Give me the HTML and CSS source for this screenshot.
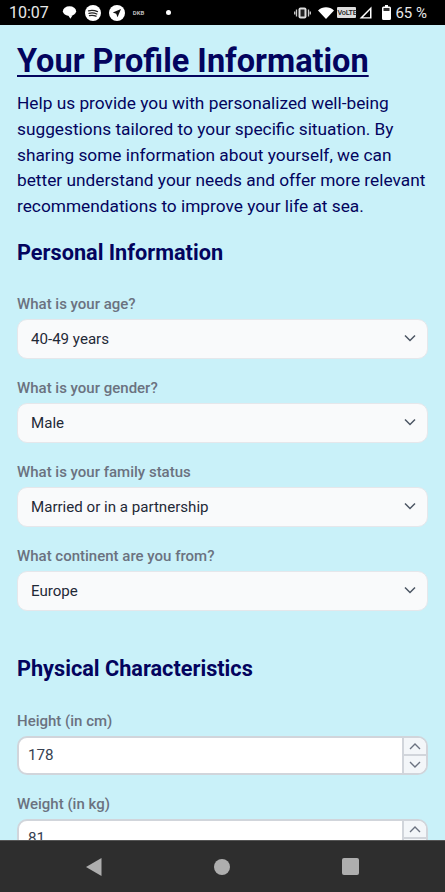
FILE: index.html
```html
<!DOCTYPE html>
<html lang="en">
<head>
<meta charset="utf-8">
<title>Your Profile Information</title>
<link rel="stylesheet" href="styles.css">
</head>
<body>
<div class="phone">
  <header class="status">
    <span class="clock">10:07</span>
    <div class="status-left">
      <svg class="ic" width="15" height="15" viewBox="0 0 17 16"><ellipse cx="8.500" cy="6.500" rx="7.500" ry="5.500" fill="#fff"/><path d="M7 11h5l-2.500 4z" fill="#fff"/></svg>
      <svg class="ic" width="16" height="16" viewBox="0 0 16 16"><circle cx="8" cy="8" r="8" fill="#fff"/><path d="M3.500 5.800c3-.8 6-.6 9 .8M4 8.300c2.700-.7 5.200-.5 7.800.7M4.500 10.600c2.200-.5 4.400-.4 6.500.6" fill="none" stroke="#222" stroke-width="1.300" stroke-linecap="round"/></svg>
      <svg class="ic" width="16" height="16" viewBox="0 0 16 16"><circle cx="8" cy="8" r="8" fill="#fff"/><path d="M12 4L3.800 7.400l3.400 1.300 1.300 3.600z" fill="#111"/></svg>
      <span class="tiny">DKB</span>
      <span class="dot"></span>
    </div>
    <div class="status-right">
      <svg class="ic" width="17" height="12" viewBox="0 0 17 12"><rect x="4.500" y="0.500" width="8" height="11" rx="2" fill="#ddd"/><rect x="6.500" y="2.500" width="4" height="7" fill="#222"/><path d="M2.500 2.500v7M14.500 2.500v7M.7 4.500v3M16.300 4.500v3" stroke="#ccc" stroke-width="1.300"/></svg>
      <svg class="ic wifi" width="16" height="12" viewBox="0 0 16 12"><path d="M0 3.500C4.500-.8 11.500-.8 16 3.500L8 12z" fill="#fff"/></svg>
      <span class="volte">VoLTE</span>
      <svg class="ic signal" width="13" height="13" viewBox="0 0 13 13"><path d="M12.500.5v12H.5zM11 4L4 11.200h7z" fill="#fff" fill-rule="evenodd"/></svg>
      <svg class="ic batt" width="9" height="15" viewBox="0 0 9 15"><path d="M3 0h3v1.500h1.500A1.500 1.500 0 0 1 9 3v10.500A1.500 1.500 0 0 1 7.500 15h-6A1.500 1.500 0 0 1 0 13.500V3a1.500 1.500 0 0 1 1.500-1.500H3z" fill="#fff"/><rect x="1.500" y="3" width="6" height="3" fill="#333"/></svg>
      <span class="pct">65 %</span>
    </div>
  </header>

  <main class="content">
    <h1>Your Profile Information</h1>
    <p class="intro">Help us provide you with personalized well-being suggestions tailored to your specific situation. By sharing some information about yourself, we can better understand your needs and offer more relevant recommendations to improve your life at sea.</p>

    <h2>Personal Information</h2>
    <div class="field">
      <label>What is your age?</label>
      <div class="select">40-49 years<svg class="chev" width="12" height="8" viewBox="0 0 12 8"><path d="M1 1.500l5 5 5-5" fill="none" stroke="#4b5563" stroke-width="1.500"/></svg></div>
    </div>
    <div class="field">
      <label>What is your gender?</label>
      <div class="select">Male<svg class="chev" width="12" height="8" viewBox="0 0 12 8"><path d="M1 1.500l5 5 5-5" fill="none" stroke="#4b5563" stroke-width="1.500"/></svg></div>
    </div>
    <div class="field">
      <label>What is your family status</label>
      <div class="select">Married or in a partnership<svg class="chev" width="12" height="8" viewBox="0 0 12 8"><path d="M1 1.500l5 5 5-5" fill="none" stroke="#4b5563" stroke-width="1.500"/></svg></div>
    </div>
    <div class="field">
      <label>What continent are you from?</label>
      <div class="select">Europe<svg class="chev" width="12" height="8" viewBox="0 0 12 8"><path d="M1 1.500l5 5 5-5" fill="none" stroke="#4b5563" stroke-width="1.500"/></svg></div>
    </div>

    <h2 class="second">Physical Characteristics</h2>
    <div class="field">
      <label>Height (in cm)</label>
      <div class="number">
        <span class="value">178</span>
        <div class="stepper">
          <span><svg width="12" height="7" viewBox="0 0 12 7"><path d="M1 6l5-5 5 5" fill="none" stroke="#6b7280" stroke-width="1.400"/></svg></span>
          <span><svg width="12" height="7" viewBox="0 0 12 7"><path d="M1 1l5 5 5-5" fill="none" stroke="#6b7280" stroke-width="1.400"/></svg></span>
        </div>
      </div>
    </div>
    <div class="field">
      <label>Weight (in kg)</label>
      <div class="number">
        <span class="value">81</span>
        <div class="stepper">
          <span><svg width="12" height="7" viewBox="0 0 12 7"><path d="M1 6l5-5 5 5" fill="none" stroke="#6b7280" stroke-width="1.400"/></svg></span>
          <span><svg width="12" height="7" viewBox="0 0 12 7"><path d="M1 1l5 5 5-5" fill="none" stroke="#6b7280" stroke-width="1.400"/></svg></span>
        </div>
      </div>
    </div>
  </main>

  <nav class="navbar">
    <svg width="16" height="18" viewBox="0 0 16 18"><path d="M15.500 0v18L0 9z" fill="#aeaeae"/></svg>
    <svg width="16" height="16" viewBox="0 0 16 16"><circle cx="8" cy="8" r="8" fill="#aeaeae"/></svg>
    <svg width="17" height="17" viewBox="0 0 17 17"><rect width="17" height="17" rx="2" fill="#aeaeae"/></svg>
  </nav>
</div>
</body>
</html>
```

FILE: styles.css
```css
* { box-sizing: border-box; }
html, body { margin: 0; padding: 0; height: 100%; }
body { font-family: Roboto, "Liberation Sans", sans-serif; background: #c9f1f9; }

.phone { width: 445px; height: 892px; display: flex; flex-direction: column; overflow: hidden; }

.status { height: 25px; flex: none; background: #000; color: #e8e8e8; display: flex; align-items: center; padding: 0 18px 0 9px; }
.clock { font-size: 16px; margin-right: 13px; }
.status-left { display: flex; align-items: center; gap: 8px; }
.status-right { margin-left: auto; display: flex; align-items: center; gap: 3px; }
.ic { display: block; flex: none; }
.tiny { font-size: 6px; font-weight: 700; color: #bbb; margin-right: 11px; width: 14px; }
.dot { width: 5px; height: 5px; border-radius: 50%; background: #fff; }
.wifi { margin-left: 4px; }
.volte { background: #ddd; color: #222; font-size: 7.300px; font-weight: 500; line-height: 11px; width: 19px; text-align: center; border-radius: 1px; white-space: nowrap; letter-spacing: -.2px; }
.signal { margin-right: 7px; }
.batt { margin-right: 1px; }
.pct { font-size: 15px; }

.content { flex: 1; min-height: 0; overflow: hidden; padding: 0 17px; color: #03045e; }
h1 { margin: 18px 0 0; font-size: 32.500px; line-height: 36px; font-weight: 700; text-decoration: underline; text-decoration-thickness: 2px; text-underline-offset: 3px; white-space: nowrap; }
.intro { margin: 12px 0 0; font-size: 17.300px; line-height: 25.800px; }
h2 { margin: 19px 0 0; font-size: 21.700px; line-height: 28px; font-weight: 700; }
h2.second { margin-top: 44px; }
.field { display: flex; flex-direction: column; }
h2 + .field { margin-top: 27px; }
h2.second + .field { margin-top: 28px; }
.field + .field { margin-top: 19px; }
.field label { font-size: 15px; line-height: 20px; font-weight: 500; color: #6b7280; margin-bottom: 5px; }

.select { position: relative; height: 40px; background: #f9fafb; border: 1px solid #e5e7eb; border-radius: 10px; padding-left: 13px; font-size: 15.100px; line-height: 39px; color: #1f2937; }
.chev { position: absolute; right: 11px; top: 14px; }

.number { display: flex; height: 39px; flex: none; background: #fff; border: 2px solid #d1d5db; border-radius: 10px; overflow: hidden; font-size: 15.200px; color: #374151; }
.value { flex: 1; padding-left: 9px; line-height: 35px; }
.stepper { width: 24px; flex: none; display: flex; flex-direction: column; border-left: 2px solid #d1d5db; background: #f3f6f9; }
.stepper span { flex: 1; display: flex; align-items: center; justify-content: center; }
.stepper span + span { border-top: 2px solid #d1d5db; }

.navbar { height: 52px; flex: none; background: #2e2e2e; border-top: 1px solid #555; display: flex; align-items: center; padding: 0 86px; justify-content: space-between; }
```
